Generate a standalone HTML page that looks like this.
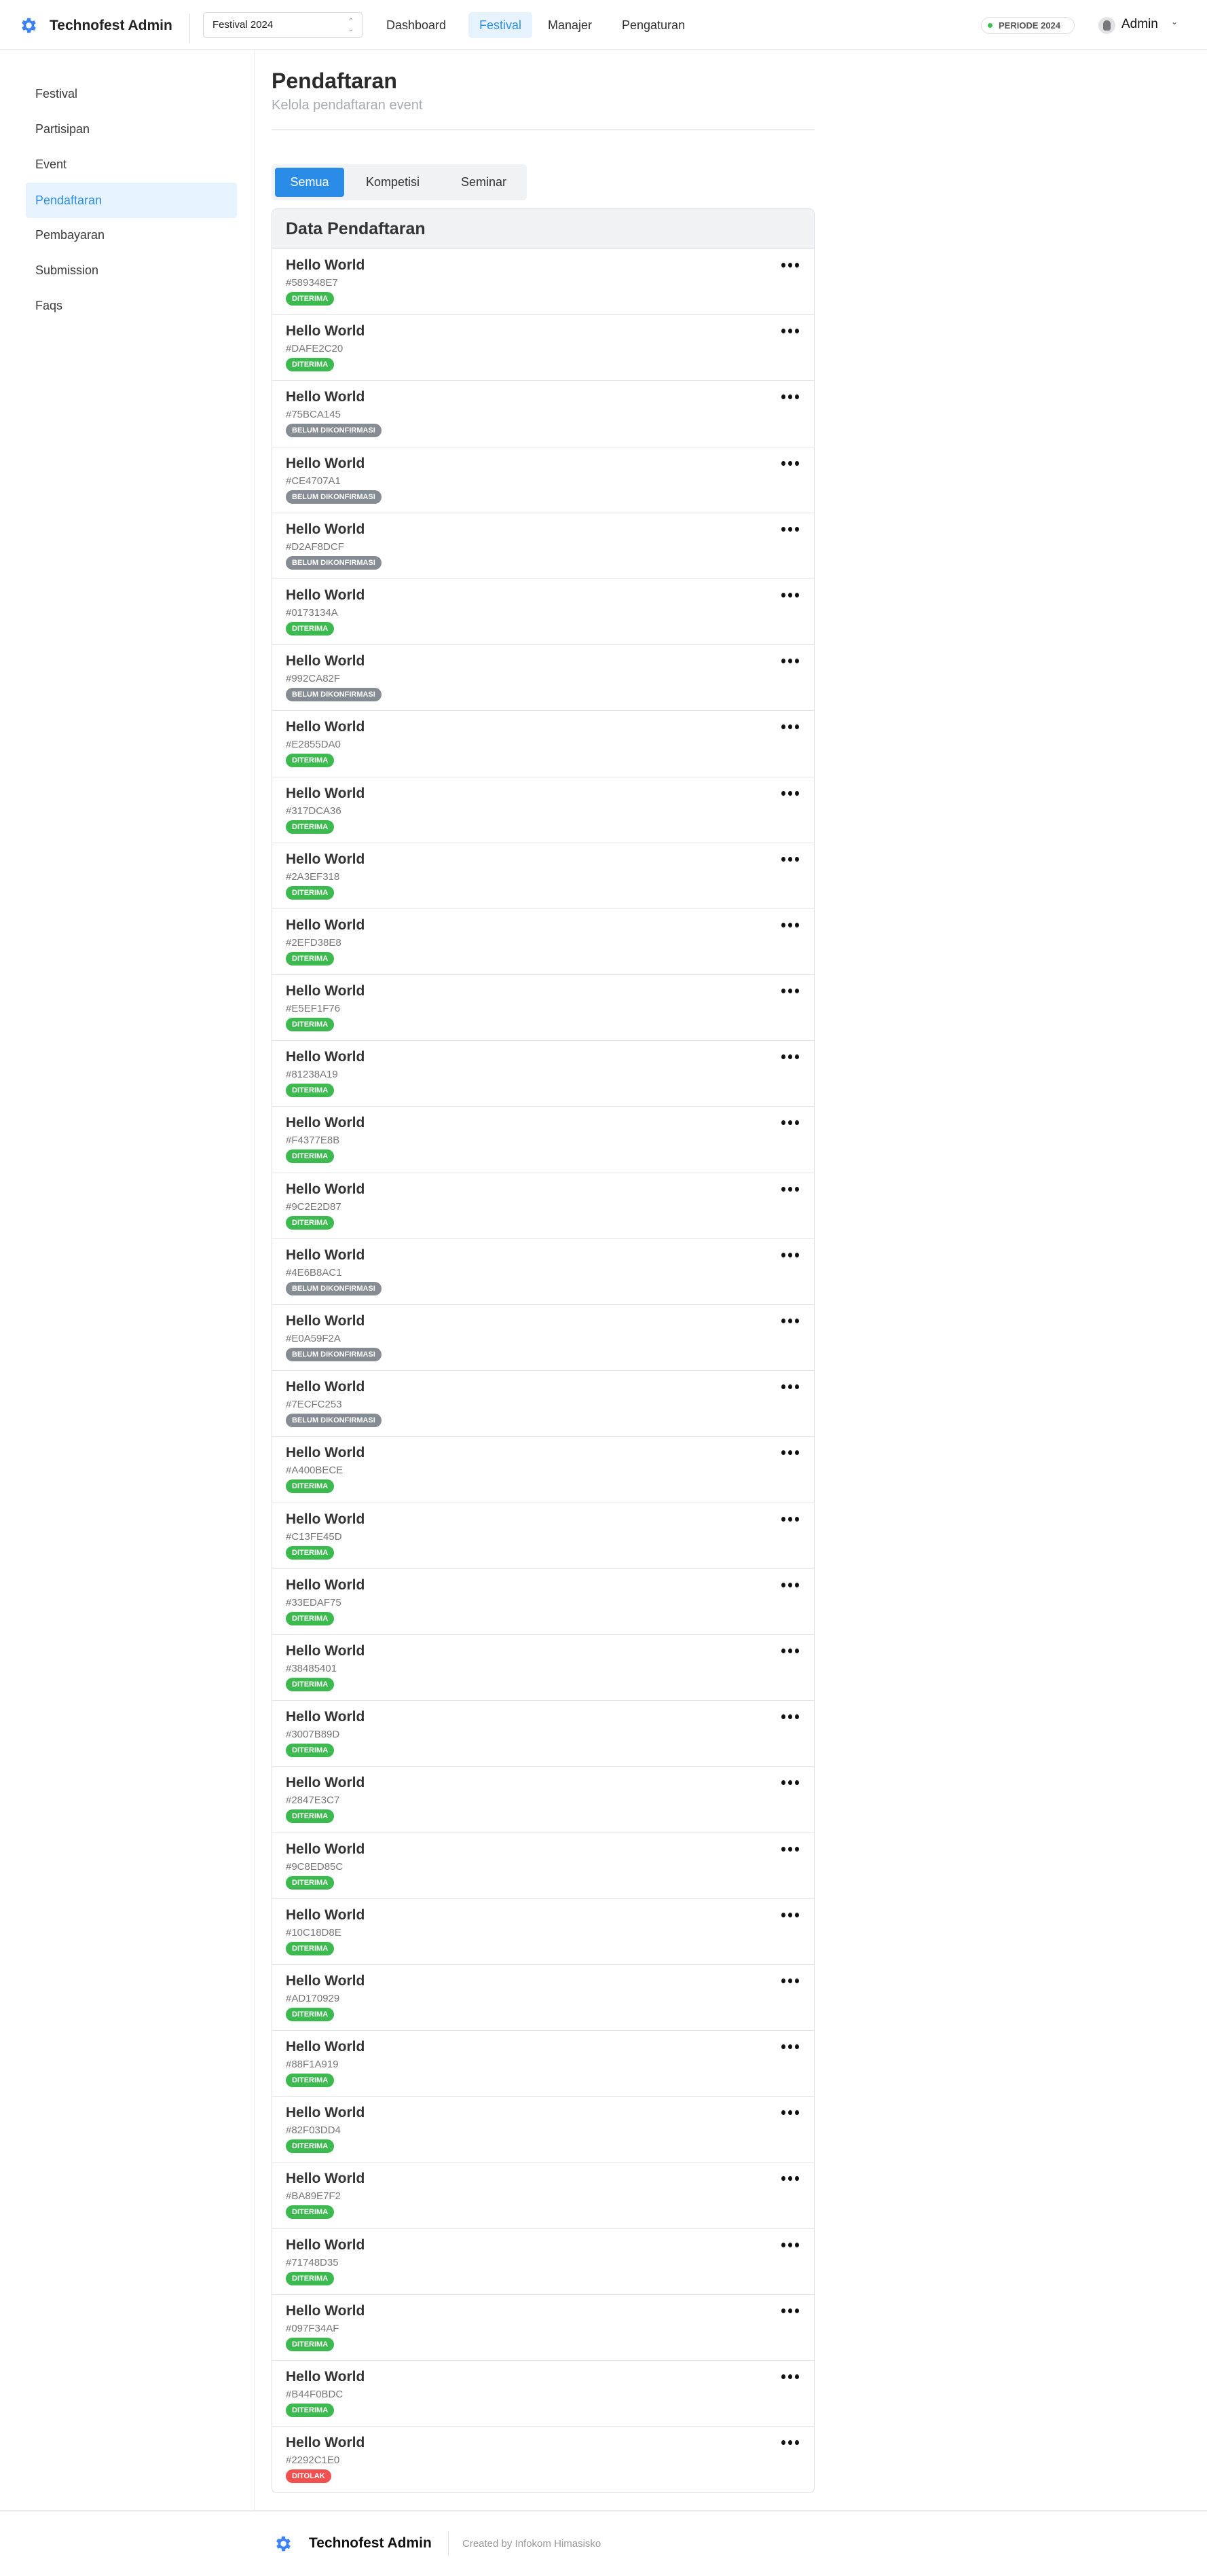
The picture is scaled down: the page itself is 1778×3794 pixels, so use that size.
<!DOCTYPE html>
<html><head><meta charset="utf-8"><style>
*{box-sizing:border-box;margin:0;padding:0}
body{width:1778px;height:3794px;background:#fff;font-family:"Liberation Sans",sans-serif;color:#222;position:relative;overflow:hidden}
.abs{position:absolute}
.hdr{left:0;top:0;width:1778px;height:74px;border-bottom:2px solid #ececee}
.nav{font-size:18px;color:#333;top:18px;height:38px;line-height:38px}
.side{left:0;top:74px;width:375px;height:3624px;border-right:1px solid #eeeef0}
.si{position:absolute;left:38px;width:311px;height:52px;line-height:52px;padding-left:14px;font-size:18px;color:#3a3a3a;border-radius:4px}
.card{left:400px;top:307px;width:800px;height:3365px;border:1px solid #dcdde0;border-radius:8px;overflow:hidden}
.ch{height:59px;background:#f1f2f4;border-bottom:1px solid #dcdde0;padding-left:20px;line-height:58px;font-size:25px;font-weight:bold;color:#333}
.row{height:97.2px;border-bottom:1px solid #e4e5e8;padding:11px 20px 0;position:relative}
.row:last-child{border-bottom:none}
.t{font-size:21px;font-weight:bold;color:#333;line-height:26px}
.id{font-size:15px;color:#777;line-height:20px;margin-top:3px}
.b{display:inline-block;height:20px;line-height:20px;padding:0 9px;border-radius:10px;color:#fff;font-size:11px;font-weight:bold;margin-top:3px}
.g{background:#3cba4f}.y{background:#868c94}.r{background:#f05050}
.dots{position:absolute;right:22px;top:20px;width:26px;height:8px}
.dots i{position:absolute;top:0;width:6px;height:7px;background:#111;border-radius:50%}
</style></head><body>
<div class="abs hdr"></div>
<svg class="abs" style="left:28px;top:23px" width="29" height="29" viewBox="0 0 24 24"><path fill="#3b82f6" d="M19.4 13a7.5 7.5 0 0 0 0-2l2.1-1.6-2-3.5-2.5 1a7 7 0 0 0-1.7-1L15 3h-4l-.4 2.7a7 7 0 0 0-1.7 1l-2.5-1-2 3.5L6.6 11a7.5 7.5 0 0 0 0 2l-2.1 1.6 2 3.5 2.5-1a7 7 0 0 0 1.7 1L11 21h4l.4-2.7a7 7 0 0 0 1.7-1l2.5 1 2-3.5zM13 15.5a3.5 3.5 0 1 1 0-7 3.5 3.5 0 0 1 0 7z" transform="translate(-1 0)"/></svg>
<div class="abs" style="left:73px;top:24px;font-size:21px;font-weight:bold;color:#222;line-height:28px">Technofest Admin</div>
<div class="abs" style="left:279px;top:20px;width:1px;height:44px;background:#ddd"></div>
<div class="abs" style="left:299px;top:18px;width:235px;height:38px;border:1px solid #d6d7da;border-radius:5px;font-size:15px;line-height:36px;padding-left:13px;color:#222">Festival 2024<span style="position:absolute;right:12px;top:0;font-size:10px;color:#888;line-height:12px;padding-top:7px">⌃<br>⌄</span></div>
<div class="abs nav" style="left:569px">Dashboard</div>
<div class="abs nav" style="left:690px;width:94px;background:#e6f3fd;border-radius:5px;text-align:center;color:#2f8ee6">Festival</div>
<div class="abs nav" style="left:807px">Manajer</div>
<div class="abs nav" style="left:916px">Pengaturan</div>
<div class="abs" style="left:1445px;top:25px;width:138px;height:25px;border:1px solid #dedfe2;border-radius:13px;font-size:13px;font-weight:bold;color:#555;line-height:23px;padding-left:25px">PERIODE 2024</div>
<div class="abs" style="left:1455px;top:34px;width:7px;height:7px;border-radius:50%;background:#3cc253"></div>
<div class="abs" style="left:1618px;top:25px;width:25px;height:25px;border-radius:50%;background:#e2e2e4"><div style="position:absolute;left:7px;top:5px;width:11px;height:15px;background:#777;border-radius:5px 5px 3px 3px"></div></div>
<div class="abs" style="left:1652px;top:22px;font-size:19px;color:#111;line-height:28px">Admin</div>
<div class="abs" style="left:1725px;top:25px;font-size:12px;color:#444">⌄</div>

<div class="abs side"></div>
<div class="si" style="top:112px">Festival</div>
<div class="si" style="top:164px">Partisipan</div>
<div class="si" style="top:216px">Event</div>
<div class="si" style="top:269px;background:#e6f3fd;color:#2f8ee6">Pendaftaran</div>
<div class="si" style="top:320px">Pembayaran</div>
<div class="si" style="top:372px">Submission</div>
<div class="si" style="top:424px">Faqs</div>

<div class="abs" style="left:400px;top:100px;font-size:32px;font-weight:bold;color:#2a2a2a;line-height:38px">Pendaftaran</div>
<div class="abs" style="left:400px;top:142px;font-size:20px;color:#a9abb3;line-height:26px">Kelola pendaftaran event</div>
<div class="abs" style="left:400px;top:190px;width:800px;height:2px;background:#ececee"></div>

<div class="abs" style="left:400px;top:242px;width:376px;height:53px;background:#f1f2f4;border-radius:5px"></div>
<div class="abs" style="left:405px;top:247px;width:102px;height:43px;background:#2a8ce6;border-radius:4px;color:#fff;font-size:18px;line-height:43px;text-align:center">Semua</div>
<div class="abs" style="left:539px;top:247px;font-size:18px;line-height:43px;color:#333">Kompetisi</div>
<div class="abs" style="left:679px;top:247px;font-size:18px;line-height:43px;color:#333">Seminar</div>

<div class="abs card"><div class="ch">Data Pendaftaran</div>
<div class="row"><div class="t">Hello World</div><div class="id">#589348E7</div><span class="b g">DITERIMA</span><div class="dots"><i style="left:0"></i><i style="left:10px"></i><i style="left:20px"></i></div></div>
<div class="row"><div class="t">Hello World</div><div class="id">#DAFE2C20</div><span class="b g">DITERIMA</span><div class="dots"><i style="left:0"></i><i style="left:10px"></i><i style="left:20px"></i></div></div>
<div class="row"><div class="t">Hello World</div><div class="id">#75BCA145</div><span class="b y">BELUM DIKONFIRMASI</span><div class="dots"><i style="left:0"></i><i style="left:10px"></i><i style="left:20px"></i></div></div>
<div class="row"><div class="t">Hello World</div><div class="id">#CE4707A1</div><span class="b y">BELUM DIKONFIRMASI</span><div class="dots"><i style="left:0"></i><i style="left:10px"></i><i style="left:20px"></i></div></div>
<div class="row"><div class="t">Hello World</div><div class="id">#D2AF8DCF</div><span class="b y">BELUM DIKONFIRMASI</span><div class="dots"><i style="left:0"></i><i style="left:10px"></i><i style="left:20px"></i></div></div>
<div class="row"><div class="t">Hello World</div><div class="id">#0173134A</div><span class="b g">DITERIMA</span><div class="dots"><i style="left:0"></i><i style="left:10px"></i><i style="left:20px"></i></div></div>
<div class="row"><div class="t">Hello World</div><div class="id">#992CA82F</div><span class="b y">BELUM DIKONFIRMASI</span><div class="dots"><i style="left:0"></i><i style="left:10px"></i><i style="left:20px"></i></div></div>
<div class="row"><div class="t">Hello World</div><div class="id">#E2855DA0</div><span class="b g">DITERIMA</span><div class="dots"><i style="left:0"></i><i style="left:10px"></i><i style="left:20px"></i></div></div>
<div class="row"><div class="t">Hello World</div><div class="id">#317DCA36</div><span class="b g">DITERIMA</span><div class="dots"><i style="left:0"></i><i style="left:10px"></i><i style="left:20px"></i></div></div>
<div class="row"><div class="t">Hello World</div><div class="id">#2A3EF318</div><span class="b g">DITERIMA</span><div class="dots"><i style="left:0"></i><i style="left:10px"></i><i style="left:20px"></i></div></div>
<div class="row"><div class="t">Hello World</div><div class="id">#2EFD38E8</div><span class="b g">DITERIMA</span><div class="dots"><i style="left:0"></i><i style="left:10px"></i><i style="left:20px"></i></div></div>
<div class="row"><div class="t">Hello World</div><div class="id">#E5EF1F76</div><span class="b g">DITERIMA</span><div class="dots"><i style="left:0"></i><i style="left:10px"></i><i style="left:20px"></i></div></div>
<div class="row"><div class="t">Hello World</div><div class="id">#81238A19</div><span class="b g">DITERIMA</span><div class="dots"><i style="left:0"></i><i style="left:10px"></i><i style="left:20px"></i></div></div>
<div class="row"><div class="t">Hello World</div><div class="id">#F4377E8B</div><span class="b g">DITERIMA</span><div class="dots"><i style="left:0"></i><i style="left:10px"></i><i style="left:20px"></i></div></div>
<div class="row"><div class="t">Hello World</div><div class="id">#9C2E2D87</div><span class="b g">DITERIMA</span><div class="dots"><i style="left:0"></i><i style="left:10px"></i><i style="left:20px"></i></div></div>
<div class="row"><div class="t">Hello World</div><div class="id">#4E6B8AC1</div><span class="b y">BELUM DIKONFIRMASI</span><div class="dots"><i style="left:0"></i><i style="left:10px"></i><i style="left:20px"></i></div></div>
<div class="row"><div class="t">Hello World</div><div class="id">#E0A59F2A</div><span class="b y">BELUM DIKONFIRMASI</span><div class="dots"><i style="left:0"></i><i style="left:10px"></i><i style="left:20px"></i></div></div>
<div class="row"><div class="t">Hello World</div><div class="id">#7ECFC253</div><span class="b y">BELUM DIKONFIRMASI</span><div class="dots"><i style="left:0"></i><i style="left:10px"></i><i style="left:20px"></i></div></div>
<div class="row"><div class="t">Hello World</div><div class="id">#A400BECE</div><span class="b g">DITERIMA</span><div class="dots"><i style="left:0"></i><i style="left:10px"></i><i style="left:20px"></i></div></div>
<div class="row"><div class="t">Hello World</div><div class="id">#C13FE45D</div><span class="b g">DITERIMA</span><div class="dots"><i style="left:0"></i><i style="left:10px"></i><i style="left:20px"></i></div></div>
<div class="row"><div class="t">Hello World</div><div class="id">#33EDAF75</div><span class="b g">DITERIMA</span><div class="dots"><i style="left:0"></i><i style="left:10px"></i><i style="left:20px"></i></div></div>
<div class="row"><div class="t">Hello World</div><div class="id">#38485401</div><span class="b g">DITERIMA</span><div class="dots"><i style="left:0"></i><i style="left:10px"></i><i style="left:20px"></i></div></div>
<div class="row"><div class="t">Hello World</div><div class="id">#3007B89D</div><span class="b g">DITERIMA</span><div class="dots"><i style="left:0"></i><i style="left:10px"></i><i style="left:20px"></i></div></div>
<div class="row"><div class="t">Hello World</div><div class="id">#2847E3C7</div><span class="b g">DITERIMA</span><div class="dots"><i style="left:0"></i><i style="left:10px"></i><i style="left:20px"></i></div></div>
<div class="row"><div class="t">Hello World</div><div class="id">#9C8ED85C</div><span class="b g">DITERIMA</span><div class="dots"><i style="left:0"></i><i style="left:10px"></i><i style="left:20px"></i></div></div>
<div class="row"><div class="t">Hello World</div><div class="id">#10C18D8E</div><span class="b g">DITERIMA</span><div class="dots"><i style="left:0"></i><i style="left:10px"></i><i style="left:20px"></i></div></div>
<div class="row"><div class="t">Hello World</div><div class="id">#AD170929</div><span class="b g">DITERIMA</span><div class="dots"><i style="left:0"></i><i style="left:10px"></i><i style="left:20px"></i></div></div>
<div class="row"><div class="t">Hello World</div><div class="id">#88F1A919</div><span class="b g">DITERIMA</span><div class="dots"><i style="left:0"></i><i style="left:10px"></i><i style="left:20px"></i></div></div>
<div class="row"><div class="t">Hello World</div><div class="id">#82F03DD4</div><span class="b g">DITERIMA</span><div class="dots"><i style="left:0"></i><i style="left:10px"></i><i style="left:20px"></i></div></div>
<div class="row"><div class="t">Hello World</div><div class="id">#BA89E7F2</div><span class="b g">DITERIMA</span><div class="dots"><i style="left:0"></i><i style="left:10px"></i><i style="left:20px"></i></div></div>
<div class="row"><div class="t">Hello World</div><div class="id">#71748D35</div><span class="b g">DITERIMA</span><div class="dots"><i style="left:0"></i><i style="left:10px"></i><i style="left:20px"></i></div></div>
<div class="row"><div class="t">Hello World</div><div class="id">#097F34AF</div><span class="b g">DITERIMA</span><div class="dots"><i style="left:0"></i><i style="left:10px"></i><i style="left:20px"></i></div></div>
<div class="row"><div class="t">Hello World</div><div class="id">#B44F0BDC</div><span class="b g">DITERIMA</span><div class="dots"><i style="left:0"></i><i style="left:10px"></i><i style="left:20px"></i></div></div>
<div class="row"><div class="t">Hello World</div><div class="id">#2292C1E0</div><span class="b r">DITOLAK</span><div class="dots"><i style="left:0"></i><i style="left:10px"></i><i style="left:20px"></i></div></div>
</div>

<div class="abs" style="left:0;top:3697px;width:1778px;height:2px;background:#ececee"></div>
<svg class="abs" style="left:403px;top:3732px" width="29" height="29" viewBox="0 0 24 24"><path fill="#3b82f6" d="M19.4 13a7.5 7.5 0 0 0 0-2l2.1-1.6-2-3.5-2.5 1a7 7 0 0 0-1.7-1L15 3h-4l-.4 2.7a7 7 0 0 0-1.7 1l-2.5-1-2 3.5L6.6 11a7.5 7.5 0 0 0 0 2l-2.1 1.6 2 3.5 2.5-1a7 7 0 0 0 1.7 1L11 21h4l.4-2.7a7 7 0 0 0 1.7-1l2.5 1 2-3.5zM13 15.5a3.5 3.5 0 1 1 0-7 3.5 3.5 0 0 1 0 7z" transform="translate(-1 0)"/></svg>
<div class="abs" style="left:455px;top:3731px;font-size:21px;font-weight:bold;color:#111;line-height:30px">Technofest Admin</div>
<div class="abs" style="left:660px;top:3729px;width:1px;height:35px;background:#ddd"></div>
<div class="abs" style="left:681px;top:3736px;font-size:15px;color:#999;line-height:22px">Created by Infokom Himasisko</div>
</body></html>
